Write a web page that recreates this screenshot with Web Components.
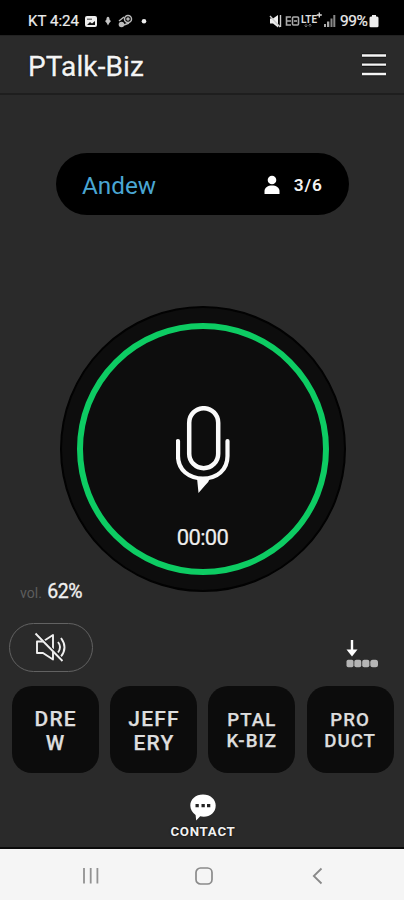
<!DOCTYPE html>
<html lang="en"><head><meta charset="utf-8"><title>PTalk-Biz</title>
<style>html,body{margin:0;height:100%;background:#2a2a2a}</style></head>
<body><ptalk-app></ptalk-app>
<script>
const define=(name,css,html)=>customElements.define(name,class extends HTMLElement{
  constructor(){super();this.attachShadow({mode:'open'}).innerHTML=`<style>*{box-sizing:border-box}svg{display:block;flex:none}${css}</style>${html}`}
});

define('status-bar',`:host{display:flex;height:35px;background:#000;padding:6px 25px 0 28px;align-items:center;color:#ececec;font-size:15px;line-height:18px;-webkit-text-stroke:.2px #ececec}
 .time{letter-spacing:.05px;white-space:pre;width:51px}.l{margin-left:5px}.r{margin-left:auto}.pct{width:29px;letter-spacing:-.4px;font-size:15.5px}`,
`<span class="time">KT 4:24</span>
<svg class="l" width="66" height="18" viewBox="84 12 66 18"><rect x="85" y="16" width="12" height="11" rx="2" fill="#eee"/><path d="M87 18.500h5v1.500h-5z" fill="#000" opacity=".5"/><path d="M87 25l3-3 2 1.500 3-2.500v4z" fill="#111"/><path d="M106.300 20c0-4.500 3.400-4.500 3.400 0l1.300 1-1.700 2-1.300 2.500-1.300-2.500-1.700-2z" fill="#c4c4c4"/><g fill="none" stroke="#bbb" stroke-width="1.500"><circle cx="128" cy="19" r="3.500"/><circle cx="128" cy="19" r="1"/><path d="M119 21l5-4M124 25l5-2"/></g><circle cx="121.500" cy="24.500" r="2.800" fill="#bbb"/><circle cx="144" cy="21.300" r="2.300" fill="#eee"/></svg>
<svg class="r" width="72" height="18" viewBox="268 12 72 18"><path d="M270 18.500h3l5-3.500v12.500l-5-4h-3z" fill="#eee"/><path d="M270 16l10 11M280.500 15v12" stroke="#ccc" stroke-width="1.400"/><g fill="none" stroke="#aaa" stroke-width="1.600"><path d="M291 17h-4.500v8h4.500M287 21h4"/><rect x="292.500" y="17" width="6" height="8" rx="1"/><path d="M294 21h3"/></g><text x="301" y="22.500" fill="#ddd" stroke="none" font-family="Roboto,sans-serif" font-size="10" font-weight="700" textLength="16" lengthAdjust="spacingAndGlyphs">LTE</text><path d="M319.300 12.500v5M316.800 15h5" stroke="#ddd" stroke-width="1.300"/><path d="M306 24v3M304.500 25.500l1.500 1.500 1.500-1.500M310 27v-3M308.500 25.500l1.500-1.500 1.500 1.500" stroke="#666" fill="none"/><path d="M324 24h2v3h-2zM327 21.500h2.300v5.500H327z" fill="#aaa"/><path d="M330.500 18.500h2v8.500h-2zM333.300 15h2v12h-2z" fill="#888"/></svg>
<span class="pct">99%</span><svg width="10" height="18" viewBox="369 12 10 18"><path d="M372 15h4v1.500h1q1.500 0 1.500 1.500v8q0 1.200-1.300 1.200h-6.400q-1.300 0-1.300-1.200V18q0-1.500 1.500-1.500h1z" fill="#eee"/></svg>`);

define('app-header',`:host{display:flex;height:60px;justify-content:space-between;align-items:center;padding:1px 18px 0 28px;border-bottom:2px solid #1e1e1e;border-top:1px solid #222;font-size:28px}
 h1{font:inherit;margin:2px 0 0;letter-spacing:.12px;color:#f4f4f4;text-shadow:0 0 2px #000;-webkit-text-stroke:.3px #f4f4f4}`,
`<h1><slot></slot></h1><svg width="24" height="24" viewBox="0 0 24 24"><path d="M0 2.500h24M0 11.700h24M0 21h24" stroke="#000" stroke-width="4.500" opacity=".45"/><path d="M0 2.500h24M0 11.700h24M0 21h24" stroke="#f5f5f5" stroke-width="2.300"/></svg>`);

define('speaker-pill',`:host{display:flex;align-items:center;width:293px;height:62px;margin:58px 0 0 56px;padding:3px 26px 0;border-radius:31px;background:#000;color:#4aa6d3;font-size:24.300px}
 svg{margin:-2px 13.500px 0 auto}b{font-size:17.300px;font-weight:600;letter-spacing:1px;color:#f3f3f3;margin:-1px 0 0}`,
`<slot></slot><svg width="16" height="20" viewBox="0 0 16 20"><circle cx="8" cy="5" r="4.300" fill="#fff"/><path d="M.5 19v-3C.5 12.500 4 10.500 8 10.500s7.500 2 7.500 5.500v3z" fill="#fff"/></svg><b><slot name="count"></slot></b>`);

define('talk-button',`:host{display:grid;width:286px;height:286px;margin:91px 0 0 60px;border-radius:50%;background:#0d0d0d;border:2px solid #020202;place-items:center}
 .ring{width:252px;height:252px;border:6px solid #0dcc63;border-radius:50%;display:flex;flex-direction:column;align-items:center;padding-top:77px;color:#eee;font-size:22px;line-height:26px}
 .t{margin-top:31px;letter-spacing:-.7px;-webkit-text-stroke:.2px #eee;margin-right:1px}`,
`<div class="ring"><svg width="54" height="88" viewBox="176 406 54 88" fill="none" stroke="#fafafa"><rect x="189.200" y="408.200" width="29" height="60" rx="14.500" stroke-width="4.500"/><path d="M178 441v15c0 14 11 22.500 25 22.500s24.500-8.500 24.500-22.500v-15" stroke-width="4.200" stroke-linecap="round"/><path d="M197 478h13q-1 4-5 7.500L198.500 493z" fill="#fafafa" stroke="none"/></svg><div class="t"><slot></slot></div></div>`);

define('volume-label',`:host{display:flex;align-items:baseline;height:26px;margin:-13px 0 0 20px;color:#5d5d5d;font-size:14px;line-height:26px;width:80px;letter-spacing:.1px}
 b{font-size:19.500px;font-weight:400;color:#f1f1f1;margin-left:5px;letter-spacing:-.4px;-webkit-text-stroke:.3px #f1f1f1}`,
`<slot></slot><b><slot name="value"></slot></b>`);

define('audio-controls',`:host{display:flex;justify-content:space-between;align-items:center;height:49px;margin:18px 25px 0 9px}
 button{width:84px;height:49px;border:1px solid #626262;border-radius:25px;background:none;padding:0 0 0 24px}.q{margin-top:13px}`,
`<button aria-label="Mute"><svg width="34" height="32" viewBox="34 632 34 32" fill="none" stroke="#f0f0f0" stroke-width="1.900" stroke-linejoin="round"><path d="M37 641.500h6l10-6.500v24.500l-10-6.500h-6z"/><path d="M58 642q4 5 0 10.500M61 638q7 9.500 0 18.500"/><path d="M37.500 634.500l26 26.500" stroke="#222" stroke-width="2.500"/><path d="M35.500 633.500l27 27.500"/></svg></button>
<svg class="q" width="34" height="29" viewBox="345 640 34 29"><path d="M352 640v12" stroke="#fff" stroke-width="2.400"/><path d="M346.500 649.500h11L352 656.500z" fill="#fff"/><g fill="#b5b5b5"><rect x="346.500" y="659.700" width="7" height="7.600" rx="1.700"/><rect x="354.300" y="659.700" width="7" height="7.600" rx="2"/><rect x="362.200" y="659.700" width="7.200" height="7.600" rx="2"/><rect x="370.300" y="659.700" width="7.700" height="7.600" rx="2.500"/></g></svg>`);

define('channel-grid',`:host{display:grid;grid-template-columns:repeat(4,87px);gap:11.300px;height:87px;margin:14px 0 0 11.700px}`,`<slot></slot>`);

define('channel-tile',`:host{display:grid;place-items:center;border-radius:20px;background:#0c0c0c;color:#dedede;font-size:21px;font-weight:500;letter-spacing:1.150px;line-height:24px;text-align:center;padding:2px 0 0 1px;-webkit-text-stroke:.25px #dedede}
 :host([small]){font-size:18.700px;line-height:21.500px;letter-spacing:1px;padding:3px 0 0}`,`<div><slot></slot></div>`);

define('contact-link',`:host{display:flex;flex-direction:column;align-items:center;height:76px;padding:21px 0 0 2px;color:#f2f2f2;font-size:13.300px;font-weight:700;line-height:16px;letter-spacing:.7px;border-bottom:2px solid #0a0a0a}
 span{margin-top:3px;text-shadow:0 0 2px #000}`,
`<svg width="28" height="27" viewBox="189 794 28 27"><path d="M203 794.500c7.300 0 12.700 4.800 12.700 11 0 6.800-5.500 11.300-12 11.300-1.300 0-2.500-.2-3.500-.5l-4 4.200-.6-5.600c-3.300-2.100-5.300-5.500-5.300-9.400 0-6.200 5.400-11 12.700-11z" fill="#fff"/><path d="M195.500 804h3.300v3.300h-3.300zM201.500 804h3.300v3.300h-3.300zM207 804h3.300v3.300H207z" fill="#222"/></svg><span><slot></slot></span>`);

define('system-nav',`:host{display:flex;height:51px;background:#f5f5f5;align-items:center;padding:3px 0 0 82px}svg+svg{margin-left:95px}svg+svg+svg{margin-left:99px}`,
`<svg width="18" height="18" fill="none" stroke="#929292" stroke-width="1.800"><path d="M2 1v15.500M8.700 1v15.500M15.400 1v15.500"/></svg>
<svg width="18" height="18" fill="none" stroke="#8a8a8a" stroke-width="1.700"><rect x="1" y="1" width="16" height="16" rx="4.500"/></svg>
<svg width="12" height="18" fill="none" stroke="#898989" stroke-width="1.800"><path d="M9.500 1.500L1.800 9l7.700 7.500"/></svg>`);

define('ptalk-app',`:host{display:flex;flex-direction:column;width:404px;height:900px;overflow:hidden;background:#2a2a2a;font-family:Roboto,"Liberation Sans",sans-serif}:host>*{flex:none}`,
`<status-bar></status-bar><app-header>PTalk-Biz</app-header>
<speaker-pill>Andew<span slot="count">3/6</span></speaker-pill>
<talk-button>00:00</talk-button>
<volume-label>vol.<span slot="value">62%</span></volume-label>
<audio-controls></audio-controls>
<channel-grid><channel-tile>DRE<br>W</channel-tile><channel-tile>JEFF<br>ERY</channel-tile><channel-tile small>PTAL<br>K-BIZ</channel-tile><channel-tile small>PRO<br>DUCT</channel-tile></channel-grid>
<contact-link>CONTACT</contact-link><system-nav></system-nav>`);
</script></body></html>
